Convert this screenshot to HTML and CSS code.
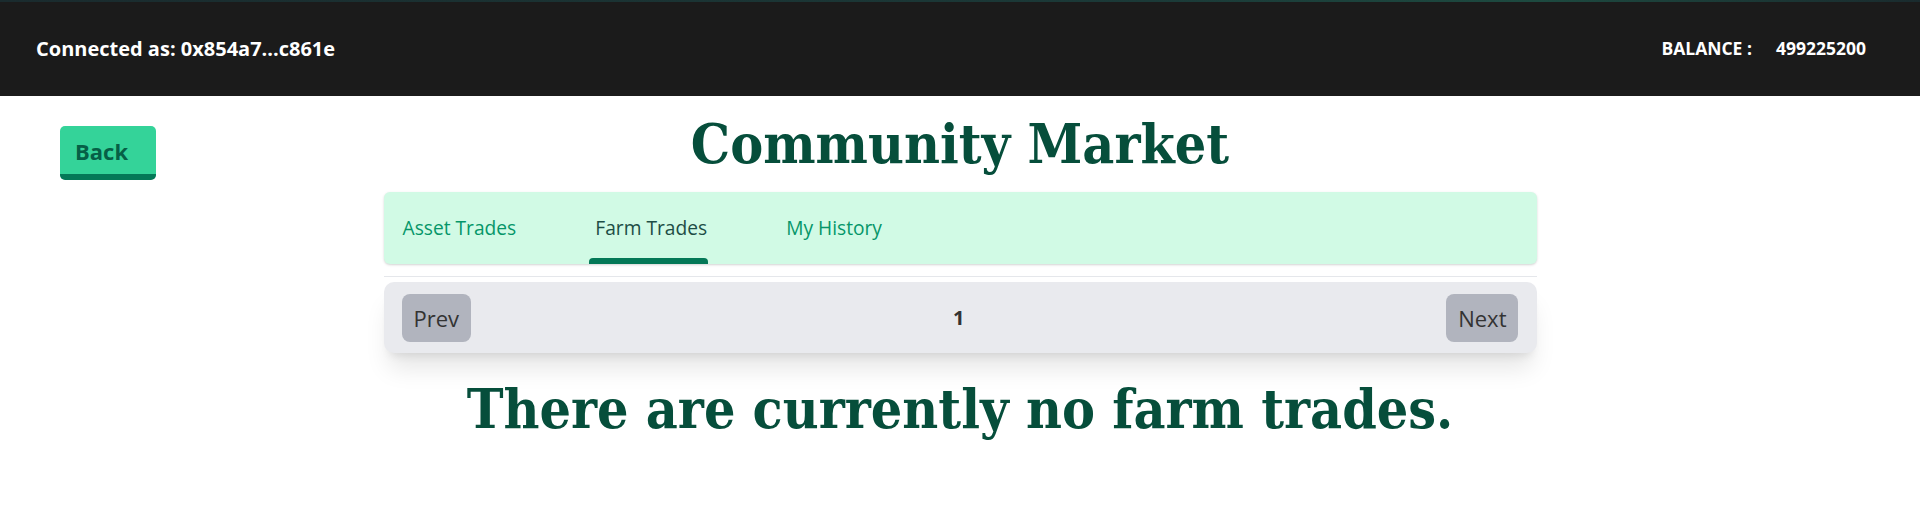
FILE: index.html
```html
<!DOCTYPE html>
<html lang="en">
<head>
<meta charset="utf-8">
<title>Community Market</title>
<link rel="stylesheet" href="styles.css">
</head>
<body>
<header class="topbar">
  <div class="connected">Connected as: 0x854a7...c861e</div>
  <div class="balance"><span class="balance-label">BALANCE :</span><span class="balance-value">499225200</span></div>
</header>
<main class="page">
  <div class="title-row">
    <div class="back-cell"><button class="back-btn">Back</button></div>
    <h1 class="title">Community Market</h1>
    <div class="spacer"></div>
  </div>
  <section class="market">
    <nav class="tabs">
      <a class="tab">Asset Trades</a>
      <a class="tab active">Farm Trades</a>
      <a class="tab">My History</a>
    </nav>
    <hr class="divider">
    <div class="pager">
      <button class="pager-btn">Prev</button>
      <span class="page-num">1</span>
      <button class="pager-btn">Next</button>
    </div>
    <h2 class="empty">There are currently no farm trades.</h2>
  </section>
</main>
</body>
</html>
```

FILE: styles.css
```css
* { box-sizing: border-box; }
html, body { margin: 0; padding: 0; background: #ffffff; }
body { font-family: "Open Sans", "Noto Sans", sans-serif; }

.topbar {
  height: 96px;
  background: linear-gradient(to right, #1a2b2e, #1b3a38 60%, #1d4a40 80%, #1a2b2e) top / 100% 2px no-repeat, #1b1b1b;
  display: flex;
  justify-content: space-between;
  align-items: center;
  padding: 0 54px 0 36px;
  color: #ffffff;
  font-weight: 700;
}
.connected { font-size: 20px; }
.balance { font-size: 17.5px; display: flex; gap: 24px; }

.title-row {
  display: grid;
  grid-template-columns: 1fr auto 1fr;
  align-items: start;
  padding-top: 30px;
}
.back-cell { padding-left: 60px; }
.back-btn {
  font-family: "Open Sans", sans-serif;
  font-weight: 700;
  font-size: 22px;
  color: #065f46;
  background: #34d399;
  border: none;
  border-bottom: 6px solid #047857;
  border-radius: 5px;
  width: 96px;
  height: 54px;
  padding: 3px 0 0 15px;
  text-align: left;
  line-height: 45px;
}
.title {
  margin: -14px 0 0;
  font-family: "DejaVu Serif Condensed", "DejaVu Serif", serif;
  font-weight: 700;
  font-size: 55px;
  line-height: 64px;
  color: #064e3b;
  white-space: nowrap;
}

.market {
  width: 1153px;
  margin: 12px auto 0;
}
.tabs {
  height: 72px;
  background: #d1fae5;
  border-radius: 6px;
  box-shadow: 0 1px 3px rgba(0,0,0,0.12), 0 1px 2px rgba(0,0,0,0.06);
  display: flex;
  padding-left: 19px;
  gap: 79px;
}
.tab {
  position: relative;
  display: flex;
  align-items: center;
  padding-bottom: 2px;
  font-size: 19.2px;
  color: #059669;
}
.tab.active { color: #1d4d45; }
.tab.active::after {
  content: "";
  position: absolute;
  left: -6px;
  right: -1px;
  bottom: 0;
  height: 6px;
  background: #047857;
  border-radius: 4px 4px 0 0;
}
.divider {
  margin: 12px 0 0;
  border: none;
  border-top: 1px solid #e5e7eb;
}
.pager {
  margin-top: 5px;
  height: 71px;
  background: #e9eaee;
  border-radius: 10px;
  padding: 0 18px;
  display: flex;
  justify-content: space-between;
  align-items: center;
  box-shadow: 0 20px 25px -5px rgba(0,0,0,0.1), 0 8px 10px -6px rgba(0,0,0,0.1);
}
.pager-btn {
  font-family: "Open Sans", sans-serif;
  font-size: 22px;
  color: #333333;
  background: #b1b4be;
  border: none;
  border-radius: 8px;
  height: 48px;
  padding: 0 12px;
}
.page-num { font-size: 20px; font-weight: 700; color: #333333; }
.empty {
  margin: 24px 0 0;
  text-align: center;
  font-family: "DejaVu Serif Condensed", "DejaVu Serif", serif;
  font-weight: 700;
  font-size: 55px;
  line-height: 64px;
  color: #064e3b;
}
```
